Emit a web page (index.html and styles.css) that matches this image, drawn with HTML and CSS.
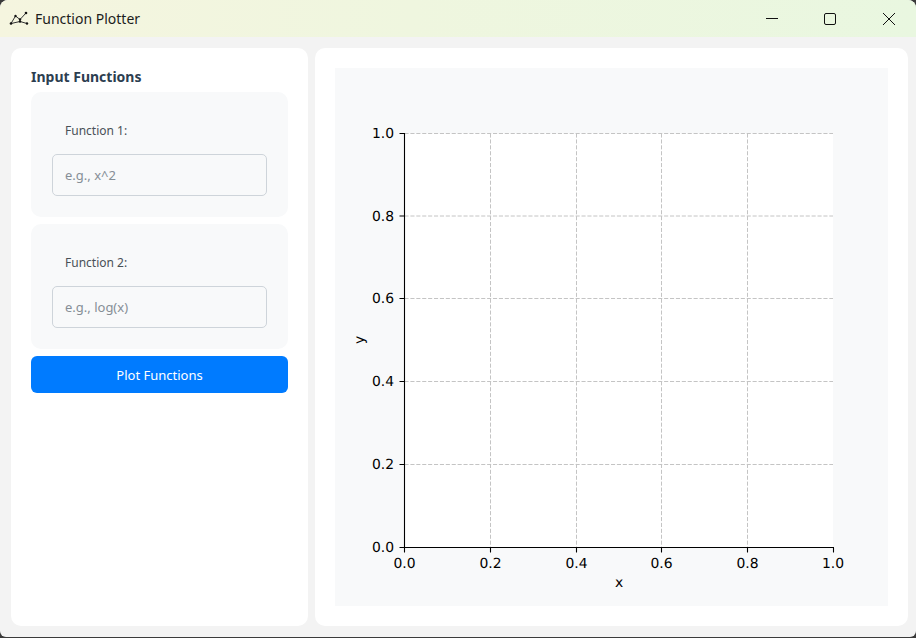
FILE: index.html
```html
<!DOCTYPE html>
<html lang="en">

<head>
    <meta charset="UTF-8">
    <title>Function Plotter</title>
    <link rel="stylesheet" href="styles.css">
</head>

<body>
    <div class="window">
        <!-- Title bar -->
        <div class="titlebar">
            <svg class="app-icon" width="20" height="16" viewBox="0 0 20 16">
                <path d="M2 14.5 6.5 7 11 10.5 17 4M2 14.5 11 12.500 18 14.5" fill="none" stroke="#333" stroke-width="1" />
                <g fill="#111">
                    <circle cx="2" cy="14.5" r="1.3" />
                    <circle cx="6.500" cy="7" r="1.200" />
                    <circle cx="11" cy="10.5" r="1.200" />
                    <circle cx="17" cy="4" r="1.300" />
                    <circle cx="11" cy="12.500" r="1.200" />
                    <circle cx="18" cy="14.5" r="1.200" />
                </g>
            </svg>
            <span class="app-title">Function Plotter</span>
            <div class="window-buttons">
                <svg width="12" height="12" viewBox="0 0 12 12"><path d="M0 5.5H12" stroke="#111" fill="none" /></svg>
                <svg width="12" height="12" viewBox="0 0 12 12"><rect x="0.5" y="0.5" width="11" height="11" rx="1.5" stroke="#111" fill="none" /></svg>
                <svg width="14" height="14" viewBox="0 0 14 14"><path d="M1 1 13 13M13 1 1 13" stroke="#111" fill="none" /></svg>
            </div>
        </div>

        <div class="main">
            <!-- Left side: inputs -->
            <div class="panel side-panel">
                <h3>Input Functions</h3>
                <div class="func-group">
                    <label for="func1">Function 1:</label>
                    <input type="text" id="func1" placeholder="e.g., x^2">
                </div>
                <div class="func-group">
                    <label for="func2">Function 2:</label>
                    <input type="text" id="func2" placeholder="e.g., log(x)">
                </div>
                <button class="plot-btn">Plot Functions</button>
            </div>

            <!-- Right side: plot -->
            <div class="panel plot-panel">
                <div class="plot-area">
                    <svg class="chart" width="553" height="538" viewBox="0 0 553 538">
                        <rect x="69.5" y="65.5" width="428.5" height="414" fill="#fff" />

                        <g class="grid">
                            <path d="M155.500 65.500V479.500M241.500 65.500V479.500M326.500 65.500V479.500M412.500 65.500V479.500" />
                            <path d="M69.500 65.500H498M69.500 148H498M69.500 230.500H498M69.500 313.500H498M69.500 396.500H498" />
                        </g>

                        <g class="axis">
                            <path d="M69.500 65V480M69 479.500H499" />
                            <path d="M64.500 65.500H69.500M64.500 148H69.500M64.500 230.500H69.500M64.500 313.500H69.500M64.500 396.500H69.500M64.500 479.500H69.500" />
                            <path d="M69.500 479.500V484.500M155.500 479.500V484.500M241.500 479.500V484.500M326.500 479.500V484.500M412.500 479.500V484.500M498.500 479.500V484.500" />
                        </g>

                        <g class="tick-y">
                            <text x="59" y="70">1.0</text>
                            <text x="59" y="152.500">0.8</text>
                            <text x="59" y="235">0.6</text>
                            <text x="59" y="318">0.4</text>
                            <text x="59" y="401">0.2</text>
                            <text x="59" y="484">0.0</text>
                        </g>
                        <g class="tick-x">
                            <text x="69.500" y="500">0.0</text>
                            <text x="155.500" y="500">0.2</text>
                            <text x="241.500" y="500">0.4</text>
                            <text x="326.500" y="500">0.6</text>
                            <text x="412.500" y="500">0.8</text>
                            <text x="498" y="500">1.0</text>
                        </g>

                        <text class="axis-label" x="284" y="519">x</text>
                        <text class="axis-label" transform="translate(29 272) rotate(-90)">y</text>
                    </svg>
                </div>
            </div>
        </div>
    </div>
</body>

</html>
```

FILE: styles.css
```css
* {
    box-sizing: border-box;
}

html,
body {
    height: 100%;
}

body {
    margin: 0;
    background-color: #3a3a3a;
    font-family: "Noto Sans", "Open Sans", sans-serif;
    overflow: hidden;
}

.window {
    display: flex;
    flex-direction: column;
    height: 637px;
    background-color: #f3f3f3;
    border-radius: 8px 8px 6px 6px;
    overflow: hidden;
}

.titlebar {
    display: flex;
    align-items: center;
    height: 37px;
    padding-left: 9px;
    background: linear-gradient(90deg, #f5f5df 0%, #eff6df 45%, #e9f7e0 100%);
    flex-shrink: 0;
}

.app-icon {
    margin-right: 6px;
    margin-top: -3px;
}

.app-title {
    font-size: 14px;
    color: #1c1c1c;
}

.window-buttons {
    display: flex;
    align-items: center;
    margin-left: auto;
    gap: 46px;
    padding-right: 20px;
}

.main {
    display: flex;
    flex: 1;
    gap: 7px;
    padding: 11px 8px 11px 11px;
}

.panel {
    background-color: #fff;
    border-radius: 10px;
    padding: 20px;
}

.side-panel {
    width: 297px;
    display: flex;
    flex-direction: column;
    gap: 7px;
}

.side-panel h3 {
    margin: 0;
    height: 17px;
    font-size: 14px;
    line-height: 18px;
    font-weight: 700;
    color: #2c3e50;
}

.func-group {
    display: flex;
    flex-direction: column;
    align-items: flex-start;
    height: 125px;
    padding: 29px 21px 0;
    background-color: #f8f9fa;
    border-radius: 10px;
}

.func-group label {
    height: 33px;
    padding-left: 13px;
    font-size: 12px;
    line-height: 20px;
    color: #495057;
}

.func-group input {
    width: 215px;
    height: 42px;
    padding: 0 12px;
    font-family: inherit;
    font-size: 13px;
    color: #333;
    background-color: #f8f9fa;
    border: 1px solid #ced4da;
    border-radius: 5px;
}

.func-group input::placeholder {
    color: #868e96;
    opacity: 1;
}

.plot-btn {
    height: 37px;
    font-family: inherit;
    font-size: 13px;
    color: #fff;
    background-color: #007bff;
    border: none;
    border-radius: 6px;
}

.plot-panel {
    flex: 1;
}

.plot-area {
    height: 100%;
    background-color: #f8f9fa;
}

.chart {
    display: block;
}

.chart text {
    font-family: "DejaVu Sans", sans-serif;
    font-size: 13.9px;
    text-rendering: geometricPrecision;
    fill: #000;
}

.grid path {
    fill: none;
    stroke: #c4c4c4;
    stroke-width: 1;
    stroke-dasharray: 4.1 1.8;
}

.axis path {
    fill: none;
    stroke: #000;
    stroke-width: 1.1;
}

.tick-y text {
    text-anchor: end;
}

.tick-x text {
    text-anchor: middle;
}

.chart .axis-label {
    text-anchor: middle;
}
```
